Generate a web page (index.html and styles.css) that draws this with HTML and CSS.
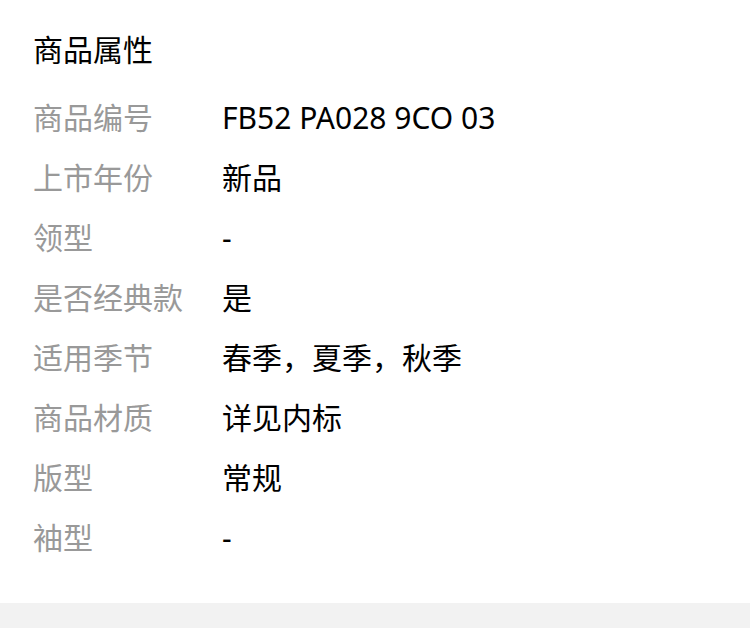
FILE: index.html
```html
<!DOCTYPE html>
<html lang="zh-CN">
  <head>
    <meta charset="utf-8" />
    <meta name="viewport" content="width=device-width, initial-scale=1" />
    <title>商品属性</title>
    <link rel="stylesheet" href="styles.css">
  </head>
  <body>
    <section class="attrs">
      <h2 class="attrs-title">商品属性</h2>
      <dl class="attrs-list">
        <dt>商品编号</dt><dd>FB52 PA028 9CO 03</dd>
        <dt>上市年份</dt><dd>新品</dd>
        <dt>领型</dt><dd>-</dd>
        <dt>是否经典款</dt><dd>是</dd>
        <dt>适用季节</dt><dd>春季，夏季，秋季</dd>
        <dt>商品材质</dt><dd>详见内标</dd>
        <dt>版型</dt><dd>常规</dd>
        <dt>袖型</dt><dd>-</dd>
      </dl>
    </section>
    <div class="spacer"></div>
  </body>
</html>
```

FILE: styles.css
```css
body {
  margin: 0;
  background-color: #fff;
  font-family: "Noto Sans", "Noto Sans CJK SC", sans-serif;
}

.attrs {
  padding: 20px 33px 35px;
}

.attrs-title {
  margin: 0 0 8px;
  font-size: 30px;
  font-weight: normal;
  line-height: 60px;
  color: #000;
}

.attrs-list {
  display: grid;
  grid-template-columns: 189px 1fr;
  margin: 0;
  font-size: 30px;
  line-height: 60px;
}

.attrs-list dt {
  color: #999;
}

.attrs-list dd {
  margin: 0;
  color: #000;
}

.spacer {
  height: 25px;
  background-color: #f2f2f2;
}
```
